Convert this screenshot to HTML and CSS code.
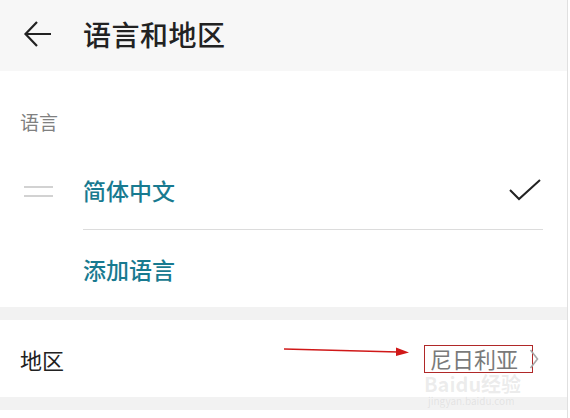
FILE: index.html
```html
<!DOCTYPE html>
<html>
<head>
  <meta charset="UTF-8">
  <title>语言和地区</title>
  <link rel="stylesheet" href="styles.css">
</head>
<body>
  <div class="page">
    <div class="topbar">
      <svg class="back" width="30" height="30" viewBox="0 0 30 30">
        <path d="M28 15 H3 M14 3 L2.5 15 L14 27" fill="none" stroke="#222" stroke-width="2.2"/>
      </svg>
      <h1>语言和地区</h1>
    </div>

    <div class="section">
      <div class="section-label">语言</div>
      <div class="lang-row">
        <span class="handle"></span>
        <span class="lang-name">简体中文</span>
        <svg class="check" width="32" height="22" viewBox="0 0 32 22">
          <path d="M1 11 L10 20 L31 1" fill="none" stroke="#222" stroke-width="2"/>
        </svg>
      </div>
      <div class="divider"></div>
      <div class="lang-row add-row">
        <span class="lang-name">添加语言</span>
      </div>
    </div>

    <div class="gap"></div>

    <div class="region-row">
      <span class="region-label">地区</span>
      <span class="region-value">
        <svg class="mark-arrow" width="130" height="12" viewBox="0 0 130 12">
          <path d="M2 3 L116 6" stroke="#d01818" stroke-width="1.4"/>
          <path d="M114 1.5 L127 6.5 L114 10 Z" fill="#d01818"/>
        </svg>
        <span class="value-box">尼日利亚</span>
        <svg class="chevron" width="10" height="20" viewBox="0 0 10 20">
          <path d="M1.5 1 L8.5 10 L1.5 19" fill="none" stroke="#a8a8a8" stroke-width="1.6"/>
        </svg>
        <span class="watermark">Baidu经验<small>jingyan.baidu.com</small></span>
      </span>
    </div>

    <div class="gap"></div>
  </div>
</body>
</html>
```

FILE: styles.css
```css
body {
  margin: 0;
  font-family: "Noto Sans CJK SC", "Noto Sans", sans-serif;
  background: #fff;
}
.page {
  width: 567px;
  height: 418px;
  border-right: 1px solid #e0e0e0;
  overflow: hidden;
}
.topbar {
  height: 71px;
  background: #f7f7f7;
  display: flex;
  align-items: center;
  padding-left: 23px;
}
.back {
  display: block;
  margin-top: -4px;
}
.topbar h1 {
  margin: -3px 0 0 30px;
  font-size: 28px;
  font-weight: 500;
  color: #222;
  line-height: 30px;
  letter-spacing: 0.5px;
}
.section-label {
  height: 80px;
  box-sizing: border-box;
  padding: 40px 0 0 20px;
  font-size: 19px;
  line-height: 22px;
  color: #808080;
}
.lang-row {
  height: 78px;
  display: flex;
  align-items: center;
  padding-left: 83px;
  padding-right: 26px;
  position: relative;
}
.add-row {
  height: 77px;
}
.handle {
  position: absolute;
  left: 24px;
  top: 35px;
  width: 29px;
  height: 7px;
  border-top: 2px solid #d2d2d2;
  border-bottom: 2px solid #d2d2d2;
}
.lang-name {
  font-size: 23px;
  font-weight: 500;
  color: #187a90;
  flex: 1;
}
.check {
  display: block;
  margin-top: -1px;
}
.divider {
  height: 1px;
  background: #dcdcdc;
  margin: 0 24px 0 83px;
}
.gap {
  height: 13px;
  background: #f2f2f2;
}
.region-row {
  height: 77px;
  display: flex;
  align-items: center;
  justify-content: space-between;
  padding: 0 28px 0 20px;
}
.region-label {
  font-size: 22px;
  color: #222;
}
.region-value {
  display: flex;
  align-items: center;
  position: relative;
}
.mark-arrow {
  position: absolute;
  left: -142px;
  top: 1px;
}
.value-box {
  display: block;
  border: 1px solid #b02828;
  padding: 0 14px 0 5px;
  height: 26px;
  line-height: 25px;
  font-size: 22px;
  color: #7a7a7a;
}
.chevron {
  display: block;
  margin-left: -4px;
}
.watermark {
  position: absolute;
  left: 0;
  top: 29px;
  font-size: 20px;
  line-height: 20px;
  color: rgba(170, 170, 170, 0.22);
  font-weight: 700;
  white-space: nowrap;
}
.watermark small {
  display: block;
  font-size: 10px;
  line-height: 14px;
  font-weight: 400;
  padding-left: 4px;
}
```
